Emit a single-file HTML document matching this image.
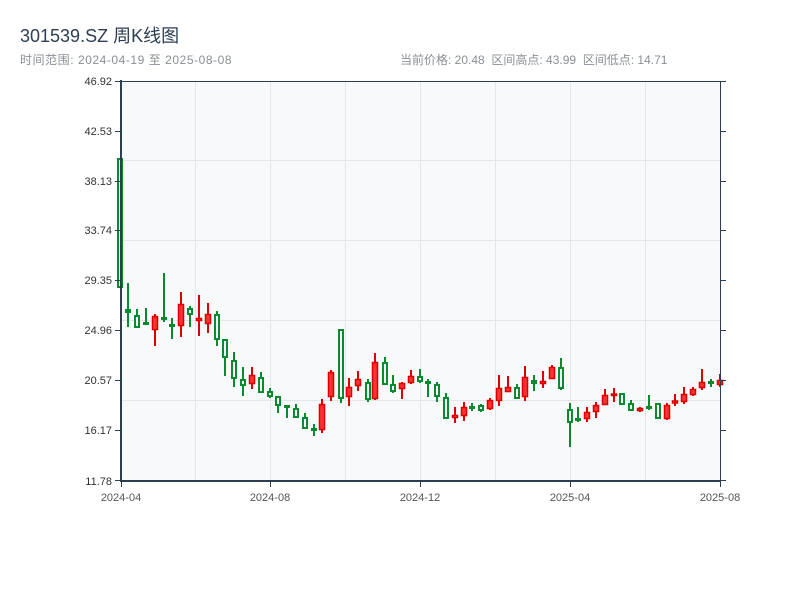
<!DOCTYPE html>
<html><head><meta charset="utf-8"><style>
body{margin:0;width:800px;height:600px;background:#fff;font-family:"Liberation Sans","Noto Sans CJK SC",sans-serif;position:relative;overflow:hidden}
.t{position:absolute;left:20px;top:22px;font-size:18px;color:#2c3e50}
.s{position:absolute;left:20px;top:51px;font-size:12px;color:#8a8f96;letter-spacing:0.55px}
.r{position:absolute;left:400px;top:51px;font-size:12px;color:#8a8f96;word-spacing:0}
</style></head><body>
<div class="t">301539.SZ 周K线图</div>
<div class="s">时间范围: 2024-04-19 至 2025-08-08</div>
<div class="r">当前价格: 20.48 &nbsp;区间高点: 43.99 &nbsp;区间低点: 14.71</div>
<svg width="800" height="600" style="position:absolute;left:0;top:0" font-family="Liberation Sans, sans-serif">
<rect x="121" y="81" width="599" height="400" fill="#f7f9fb"/>
<g stroke="#e2e5ea" stroke-width="1">
<line x1="195.5" y1="81" x2="195.5" y2="481"/><line x1="270.5" y1="81" x2="270.5" y2="481"/><line x1="345.5" y1="81" x2="345.5" y2="481"/><line x1="420.5" y1="81" x2="420.5" y2="481"/><line x1="495.5" y1="81" x2="495.5" y2="481"/><line x1="570.5" y1="81" x2="570.5" y2="481"/><line x1="645.5" y1="81" x2="645.5" y2="481"/>
<line x1="121" y1="160.5" x2="720" y2="160.5"/><line x1="121" y1="240.5" x2="720" y2="240.5"/><line x1="121" y1="320.5" x2="720" y2="320.5"/><line x1="121" y1="400.5" x2="720" y2="400.5"/>
</g>
<g stroke="#0a8a2e" stroke-width="2">
<line x1="120" y1="158" x2="120" y2="287"/><line x1="128" y1="283" x2="128" y2="327"/><line x1="137" y1="309" x2="137" y2="327"/><line x1="146" y1="308" x2="146" y2="324"/><line x1="164" y1="273" x2="164" y2="322"/><line x1="172" y1="318" x2="172" y2="339"/><line x1="190" y1="306" x2="190" y2="327"/><line x1="217" y1="311" x2="217" y2="346"/><line x1="225" y1="339" x2="225" y2="376"/><line x1="234" y1="352" x2="234" y2="387"/><line x1="243" y1="367" x2="243" y2="396"/><line x1="261" y1="372" x2="261" y2="393"/><line x1="270" y1="388" x2="270" y2="398"/><line x1="278" y1="396" x2="278" y2="413"/><line x1="287" y1="405" x2="287" y2="418"/><line x1="296" y1="404" x2="296" y2="417"/><line x1="305" y1="413" x2="305" y2="428"/><line x1="314" y1="424" x2="314" y2="436"/><line x1="341" y1="329" x2="341" y2="403"/><line x1="368" y1="379" x2="368" y2="402"/><line x1="385" y1="357" x2="385" y2="384"/><line x1="393" y1="375" x2="393" y2="393"/><line x1="420" y1="369" x2="420" y2="383"/><line x1="428" y1="379" x2="428" y2="397"/><line x1="437" y1="382" x2="437" y2="402"/><line x1="446" y1="393" x2="446" y2="418"/><line x1="472" y1="403" x2="472" y2="411"/><line x1="481" y1="404" x2="481" y2="412"/><line x1="517" y1="384" x2="517" y2="398"/><line x1="534" y1="375" x2="534" y2="391"/><line x1="561" y1="358" x2="561" y2="390"/><line x1="570" y1="403" x2="570" y2="447"/><line x1="578" y1="407" x2="578" y2="422"/><line x1="622" y1="393" x2="622" y2="404"/><line x1="631" y1="400" x2="631" y2="410"/><line x1="649" y1="395" x2="649" y2="410"/><line x1="658" y1="403" x2="658" y2="418"/><line x1="711" y1="379" x2="711" y2="387"/>
</g>
<g stroke="#dd0000" stroke-width="2">
<line x1="155" y1="314" x2="155" y2="346"/><line x1="181" y1="292" x2="181" y2="337"/><line x1="199" y1="295" x2="199" y2="336"/><line x1="208" y1="303" x2="208" y2="333"/><line x1="252" y1="367" x2="252" y2="389"/><line x1="322" y1="399" x2="322" y2="433"/><line x1="331" y1="370" x2="331" y2="401"/><line x1="349" y1="378" x2="349" y2="406"/><line x1="358" y1="371" x2="358" y2="391"/><line x1="375" y1="353" x2="375" y2="400"/><line x1="402" y1="382" x2="402" y2="399"/><line x1="411" y1="370" x2="411" y2="384"/><line x1="455" y1="407" x2="455" y2="423"/><line x1="464" y1="402" x2="464" y2="421"/><line x1="490" y1="398" x2="490" y2="410"/><line x1="499" y1="375" x2="499" y2="406"/><line x1="508" y1="376" x2="508" y2="392"/><line x1="525" y1="366" x2="525" y2="401"/><line x1="543" y1="371" x2="543" y2="388"/><line x1="552" y1="365" x2="552" y2="379"/><line x1="587" y1="407" x2="587" y2="422"/><line x1="596" y1="402" x2="596" y2="418"/><line x1="605" y1="389" x2="605" y2="405"/><line x1="614" y1="388" x2="614" y2="402"/><line x1="640" y1="407" x2="640" y2="412"/><line x1="667" y1="403" x2="667" y2="420"/><line x1="675" y1="394" x2="675" y2="406"/><line x1="684" y1="387" x2="684" y2="404"/><line x1="693" y1="387" x2="693" y2="396"/><line x1="702" y1="369" x2="702" y2="390"/><line x1="720" y1="374" x2="720" y2="387"/>
</g>
<g fill="#f7f9fb" stroke="#0a8a2e" stroke-width="2">
<rect x="118" y="159" width="4" height="128"/><rect x="135" y="316" width="4" height="11"/><rect x="188" y="309" width="4" height="5"/><rect x="215" y="315" width="4" height="24"/><rect x="223" y="340" width="4" height="17"/><rect x="232" y="361" width="4" height="17"/><rect x="241" y="380" width="4" height="5"/><rect x="259" y="378" width="4" height="14"/><rect x="268" y="392" width="4" height="4"/><rect x="276" y="397" width="4" height="8"/><rect x="294" y="409" width="4" height="8"/><rect x="303" y="418" width="4" height="10"/><rect x="339" y="330" width="4" height="68"/><rect x="366" y="383" width="4" height="16"/><rect x="383" y="363" width="4" height="21"/><rect x="391" y="385" width="4" height="6"/><rect x="418" y="377" width="4" height="4"/><rect x="435" y="385" width="4" height="11"/><rect x="444" y="398" width="4" height="20"/><rect x="479" y="406" width="4" height="4"/><rect x="515" y="388" width="4" height="10"/><rect x="559" y="368" width="4" height="20"/><rect x="568" y="410" width="4" height="12"/><rect x="620" y="394" width="4" height="10"/><rect x="629" y="404" width="4" height="6"/><rect x="656" y="404" width="4" height="14"/>
</g>
<g fill="#0a8a2e">
<rect x="125" y="309" width="6" height="4"/><rect x="143" y="322" width="6" height="3"/><rect x="161" y="317" width="6" height="3"/><rect x="169" y="324" width="6" height="3"/><rect x="284" y="405" width="6" height="3"/><rect x="311" y="428" width="6" height="3"/><rect x="425" y="381" width="6" height="3"/><rect x="469" y="406" width="6" height="3"/><rect x="531" y="380" width="6" height="4"/><rect x="575" y="418" width="6" height="3"/><rect x="646" y="406" width="6" height="3"/><rect x="708" y="381" width="6" height="3"/>
</g>
<g fill="#ff3333" stroke="#dd0000" stroke-width="1.5">
<rect x="152.5" y="316.5" width="5" height="13"/><rect x="178.5" y="304.5" width="5" height="21"/><rect x="196.5" y="318.5" width="5" height="2"/><rect x="205.5" y="314.5" width="5" height="9"/><rect x="249.5" y="375.5" width="5" height="8"/><rect x="319.5" y="404.5" width="5" height="25"/><rect x="328.5" y="372.5" width="5" height="24"/><rect x="346.5" y="387.5" width="5" height="9"/><rect x="355.5" y="379.5" width="5" height="6"/><rect x="372.5" y="362.5" width="5" height="36"/><rect x="399.5" y="383.5" width="5" height="5"/><rect x="408.5" y="376.5" width="5" height="6"/><rect x="452.5" y="415.5" width="5" height="2"/><rect x="461.5" y="407.5" width="5" height="8"/><rect x="487.5" y="400.5" width="5" height="8"/><rect x="496.5" y="388.5" width="5" height="12"/><rect x="505.5" y="387.5" width="5" height="4"/><rect x="522.5" y="377.5" width="5" height="19"/><rect x="540.5" y="381.5" width="5" height="2"/><rect x="549.5" y="367.5" width="5" height="11"/><rect x="584.5" y="412.5" width="5" height="6"/><rect x="593.5" y="405.5" width="5" height="6"/><rect x="602.5" y="395.5" width="5" height="9"/><rect x="611.5" y="394" width="5" height="1.5"/><rect x="637.5" y="408.5" width="5" height="2"/><rect x="664.5" y="405.5" width="5" height="13"/><rect x="672.5" y="401" width="5" height="2"/><rect x="681.5" y="394.5" width="5" height="7"/><rect x="690.5" y="389.5" width="5" height="5"/><rect x="699.5" y="382.5" width="5" height="5"/><rect x="717.5" y="380.5" width="5" height="4"/>
</g>
<g stroke="#2c3e50">
<line x1="121" y1="81.5" x2="720" y2="81.5" stroke-width="1"/>
<line x1="720.5" y1="81" x2="720.5" y2="482" stroke-width="1"/>
<line x1="121" y1="80" x2="121" y2="482" stroke-width="2"/>
<line x1="120" y1="481" x2="721" y2="481" stroke-width="2"/>
<g stroke-width="1">
<line x1="115" y1="81.5" x2="121" y2="81.5"/><line x1="115" y1="131.5" x2="121" y2="131.5"/><line x1="115" y1="181.5" x2="121" y2="181.5"/><line x1="115" y1="230.5" x2="121" y2="230.5"/><line x1="115" y1="280.5" x2="121" y2="280.5"/><line x1="115" y1="330.5" x2="121" y2="330.5"/><line x1="115" y1="380.5" x2="121" y2="380.5"/><line x1="115" y1="430.5" x2="121" y2="430.5"/><line x1="115" y1="480.5" x2="121" y2="480.5"/>
<line x1="720" y1="81.5" x2="726" y2="81.5"/><line x1="720" y1="131.5" x2="726" y2="131.5"/><line x1="720" y1="181.5" x2="726" y2="181.5"/><line x1="720" y1="230.5" x2="726" y2="230.5"/><line x1="720" y1="280.5" x2="726" y2="280.5"/><line x1="720" y1="330.5" x2="726" y2="330.5"/><line x1="720" y1="380.5" x2="726" y2="380.5"/><line x1="720" y1="430.5" x2="726" y2="430.5"/><line x1="720" y1="480.5" x2="726" y2="480.5"/>
<line x1="121.5" y1="481" x2="121.5" y2="487"/><line x1="270.5" y1="481" x2="270.5" y2="487"/><line x1="420.5" y1="481" x2="420.5" y2="487"/><line x1="570.5" y1="481" x2="570.5" y2="487"/><line x1="720.5" y1="481" x2="720.5" y2="487"/>
</g>
</g>
<g font-size="11" fill="#333" text-anchor="end">
<text x="112" y="85">46.92</text><text x="112" y="135">42.53</text><text x="112" y="185">38.13</text><text x="112" y="234">33.74</text><text x="112" y="284">29.35</text><text x="112" y="334">24.96</text><text x="112" y="384">20.57</text><text x="112" y="434">16.17</text><text x="112" y="485">11.78</text>
</g>
<g font-size="11" fill="#555" text-anchor="middle">
<text x="121" y="501">2024-04</text><text x="270" y="501">2024-08</text><text x="420" y="501">2024-12</text><text x="570" y="501">2025-04</text><text x="720" y="501">2025-08</text>
</g>
</svg>
</body></html>
